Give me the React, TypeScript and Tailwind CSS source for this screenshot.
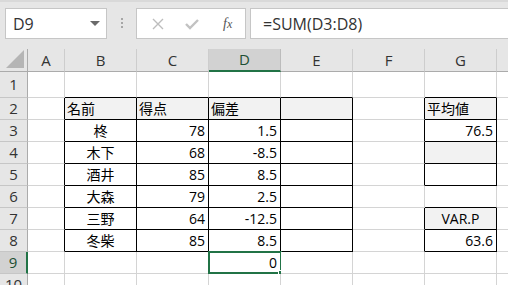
import React from 'react'

const COLS = ['A', 'B', 'C', 'D', 'E', 'F', 'G', 'H']
const WIDTHS = ['w-[37px]', 'w-[72px]', 'w-[72px]', 'w-[72px]', 'w-[72px]', 'w-[72px]', 'w-[72px]', 'w-[72px]']
const ROWS = [1, 2, 3, 4, 5, 6, 7, 8, 9, 10]

type Cell = { t?: string; a?: 'l' | 'c' | 'r'; bg?: boolean }

const cells: Record<string, Cell> = {
  B2: { t: '名前', a: 'l', bg: true },
  C2: { t: '得点', a: 'l', bg: true },
  D2: { t: '偏差', a: 'l', bg: true },
  E2: { bg: true },
  G2: { t: '平均値', a: 'l', bg: true },
  B3: { t: '柊', a: 'c' },
  B4: { t: '木下', a: 'c' },
  B5: { t: '酒井', a: 'c' },
  B6: { t: '大森', a: 'c' },
  B7: { t: '三野', a: 'c' },
  B8: { t: '冬柴', a: 'c' },
  C3: { t: '78', a: 'r' },
  C4: { t: '68', a: 'r' },
  C5: { t: '85', a: 'r' },
  C6: { t: '79', a: 'r' },
  C7: { t: '64', a: 'r' },
  C8: { t: '85', a: 'r' },
  D3: { t: '1.5', a: 'r' },
  D4: { t: '-8.5', a: 'r' },
  D5: { t: '8.5', a: 'r' },
  D6: { t: '2.5', a: 'r' },
  D7: { t: '-12.5', a: 'r' },
  D8: { t: '8.5', a: 'r' },
  G3: { t: '76.5', a: 'r' },
  G4: { bg: true },
  G7: { t: 'VAR.P', a: 'c', bg: true },
  G8: { t: '63.6', a: 'r' },
  D9: { t: '0', a: 'r' },
}

// framed ranges: row from, row to, col from, col to (A = 0)
const boxes = [
  [2, 8, 1, 4],
  [2, 5, 6, 6],
  [7, 8, 6, 6],
]
const inBox = (r: number, c: number) =>
  boxes.some(([r1, r2, c1, c2]) => r >= r1 && r <= r2 && c >= c1 && c <= c2)

const font = { fontFamily: '"Open Sans", "Noto Sans CJK JP", sans-serif' }

function NameBox() {
  return (
    <div className="ml-[5px] flex h-[31px] w-[102px] shrink-0 items-center justify-between border border-[#c6c6c6] bg-white pl-[7px] pr-[6px] text-[16px] text-[#333]">
      <span>D9</span>
      <span className="h-0 w-0 border-x-[5px] border-t-[5px] border-x-transparent border-t-[#6a6a6a]" />
    </div>
  )
}

function FormulaButtons() {
  return (
    <div className="flex h-[31px] w-[110px] shrink-0 items-center border border-[#c6c6c6] bg-white">
      <svg className="ml-[15px]" width="12" height="12" viewBox="0 0 12 12">
        <path d="M1 1 L11 11 M11 1 L1 11" stroke="#bdbdbd" strokeWidth="1.4" />
      </svg>
      <svg className="ml-[21px]" width="14" height="12" viewBox="0 0 14 12">
        <path d="M1 6 L5 10 L13 2" stroke="#c2c2c2" strokeWidth="2.4" fill="none" />
      </svg>
      <span className="ml-[24px] text-[14px] italic text-[#555]" style={{ fontFamily: '"Liberation Serif", serif' }}>
        f<span className="text-[12px]">x</span>
      </span>
    </div>
  )
}

function Toolbar() {
  return (
    <div className="flex h-[49px] items-start border-t-[2px] border-[#d9d9d9] bg-[#e6e6e6] pt-[6px]">
      <NameBox />
      <div className="ml-[14px] mt-[10px] flex shrink-0 flex-col gap-[2px]">
        <span className="h-[2px] w-[2px] bg-[#a6a6a6]" />
        <span className="h-[2px] w-[2px] bg-[#a6a6a6]" />
        <span className="h-[2px] w-[2px] bg-[#a6a6a6]" />
      </div>
      <div className="ml-[13px] shrink-0">
        <FormulaButtons />
      </div>
      <div className="ml-[4px] flex h-[31px] w-[280px] shrink-0 items-center border border-[#c6c6c6] bg-white pl-[12px] text-[16px] text-[#333]">
        =SUM(D3:D8)
      </div>
    </div>
  )
}

function HeaderRow() {
  return (
    <div className="flex h-[23px]">
      <div className="relative w-[28px] shrink-0 border-b border-r border-[#ababab] bg-[#e6e6e6]">
        <svg className="absolute bottom-[3px] right-[3px]" width="18" height="18" viewBox="0 0 18 18">
          <path d="M18 0 L18 18 L0 18 Z" fill="#b5b5b5" />
        </svg>
      </div>
      {COLS.map((c, i) =>
        c === 'D' ? (
          <div
            key={c}
            className={`${WIDTHS[i]} flex shrink-0 items-center justify-center border-b-[2px] border-r border-b-[#217346] border-r-[#bcbcbc] bg-[#d2d2d2] text-[15px] text-[#1d4f33]`}
          >
            {c}
          </div>
        ) : (
          <div
            key={c}
            className={`${WIDTHS[i]} flex shrink-0 items-center justify-center border-b border-r border-b-[#ababab] border-r-[#cdcdcd] bg-[#e6e6e6] text-[15px] text-[#333]`}
          >
            {c === 'H' ? '' : c}
          </div>
        )
      )}
    </div>
  )
}

function SheetRow({ r }: { r: number }) {
  const h = r === 1 ? 'h-[26px]' : 'h-[22px]'
  return (
    <div className={`flex ${h}`}>
      {r === 9 ? (
        <div className="flex w-[28px] shrink-0 items-center justify-center border-b border-r-[2px] border-b-[#c6c6c6] border-r-[#217346] bg-[#d2d2d2] text-[15px] text-[#1d4f33]">
          {r}
        </div>
      ) : (
        <div className="flex w-[28px] shrink-0 items-center justify-center border-b border-r border-b-[#c6c6c6] border-r-[#ababab] bg-[#e6e6e6] text-[15px] text-[#333]">
          {r}
        </div>
      )}
      {COLS.map((c, i) => {
        const d = cells[`${c}${r}`] || {}
        const right = inBox(r, i) || inBox(r, i + 1) ? 'border-r-black' : 'border-r-[#d4d4d4]'
        const bottom = inBox(r, i) || inBox(r + 1, i) ? 'border-b-black' : 'border-b-[#d4d4d4]'
        const align = d.a === 'r' ? 'justify-end pr-[3px]' : d.a === 'c' ? 'justify-center' : 'justify-start pl-[2px]'
        return (
          <div
            key={c}
            className={`${WIDTHS[i]} relative flex shrink-0 items-center border-b border-r ${right} ${bottom} ${align} ${d.bg ? 'bg-[#f2f2f2]' : 'bg-white'} text-[14px] text-black`}
          >
            {d.t}
            {c === 'D' && r === 9 && (
              <>
                <div className="absolute -bottom-[1px] -left-[1px] -right-[2px] -top-[1px] border-[2px] border-[#217346]" />
                <div className="absolute -bottom-[3px] -right-[4px] h-[6px] w-[6px] border border-white bg-[#217346]" />
              </>
            )}
          </div>
        )
      })}
    </div>
  )
}

export default function App() {
  return (
    <div className="h-[285px] w-[508px] overflow-hidden bg-white" style={font}>
      <Toolbar />
      <HeaderRow />
      {ROWS.map((r) => (
        <SheetRow key={r} r={r} />
      ))}
    </div>
  )
}
